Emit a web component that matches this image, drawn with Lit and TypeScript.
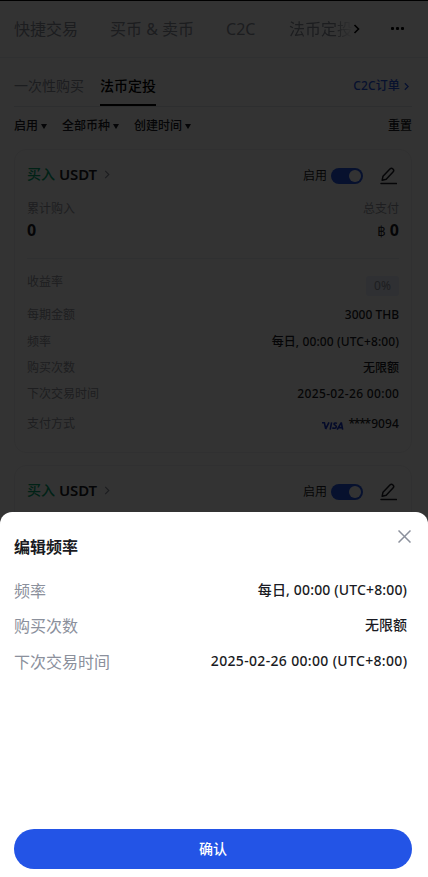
import { LitElement, html, css, svg, nothing } from "lit";
import { customElement, property } from "lit/decorators.js";

const caret = html`<svg width="6" height="5" viewBox="0 0 6 5"><path d="M0 0h6L3.4 4.6a.5.5 0 0 1-.8 0z" fill="currentColor"/></svg>`;

const chevron = (w: number, h: number, sw: number) => html`<svg width=${w} height=${h} viewBox="0 0 6 10">
  ${svg`<path d="M1 1l4 4-4 4" fill="none" stroke="currentColor" stroke-width=${sw}/>`}
</svg>`;

@customElement("plan-card")
export class PlanCard extends LitElement {
  @property() amount = "3000 THB";
  @property({ type: Boolean }) collapsed = false;

  static styles = css`
    :host { display: block; box-sizing: border-box; height: 304px; padding: 0 12px; border: 1px solid #f0f0f2; border-radius: 12px; font-size: 12px; color: #1a1b23; }
    svg { display: block; }
    .head { display: flex; align-items: center; box-sizing: border-box; height: 50px; padding-top: 2px; }
    .title { display: flex; align-items: center; height: 20px; margin-bottom: 5px; font-size: 14px; font-weight: 500; }
    .buy { color: #00a870; }
    .coin { margin-left: 4px; width: 38px; font-size: 15px; font-weight: 600; letter-spacing: -.15px; }
    .go { margin-left: 7px; color: #8b909c; margin-top: 2px; }
    .on { margin-left: auto; }
    .switch { box-sizing: border-box; width: 32px; height: 16px; margin-left: 4px; padding: 2px; border-radius: 8px; background: #2354e6; }
    .knob { width: 12px; height: 12px; margin-left: 16px; border-radius: 50%; background: #fff; }
    .edit { margin: -1px 2px 0 17px; }
    .totals { box-sizing: border-box; display: grid; grid-template-columns: 1fr auto; grid-template-rows: 18px 24px; align-content: start; height: 59px; border-bottom: 1px solid #eceef2; }
    .label { color: #9497a0; line-height: 18px; }
    .big { font-size: 16px; font-weight: 700; line-height: 24px; }
    .right { text-align: right; }
    .cur { font-family: Lato, sans-serif; font-size: 13px; font-weight: 400; }
    .row { display: flex; justify-content: space-between; align-items: center; height: 26.4px; font-weight: 500; }
    .row .label { font-weight: 400; }
    .row.profit { height: 43px; align-items: flex-start; padding-top: 14px; box-sizing: border-box; }
    .tag { width: 33px; height: 20px; margin-top: 3px; line-height: 20px; border-radius: 3px; text-align: center; background: #e8eefc; color: #9497a0; font-weight: 400; }
    .row.pay { height: 33px; }
    .daily { letter-spacing: .1px; margin-right: -.1px; }
    .date { letter-spacing: .35px; margin-right: -.35px; }
    .method { display: flex; align-items: center; gap: 4px; }
    .digits { letter-spacing: .1px; }
    .stars { letter-spacing: -1.2px; margin-right: 1.2px; }
    .visa { margin-top: 3px; }
  `;

  private details() {
    return html`
      <div class="totals">
        <span class="label">累计购入</span><span class="label right">总支付</span>
        <span class="big">0</span><span class="big right"><span class="cur">฿</span> 0</span>
      </div>
      <div class="row profit"><span class="label">收益率</span><span class="tag">0%</span></div>
      <div class="row"><span class="label">每期金额</span><span>${this.amount}</span></div>
      <div class="row"><span class="label">频率</span><span class="daily">每日, 00:00 (UTC+8:00)</span></div>
      <div class="row"><span class="label">购买次数</span><span>无限额</span></div>
      <div class="row"><span class="label">下次交易时间</span><span class="date">2025-02-26 00:00</span></div>
      <div class="row pay"><span class="label">支付方式</span>
        <span class="method">
          <svg class="visa" width="22" height="8" viewBox="0 0 22 8" fill="none" stroke="#1434cb" stroke-width="1.6">
            <path d="M0 .8h2.4l1.3 6M3.6 7.2 7 .4M9.6.3 8.2 7.6M15 1.4c-1.2-.7-3-.6-3 .5 0 1.4 2.6 1.2 2.3 3-.3 1.7-2.5 1.7-4 .9M15.2 7.6 19 1h.4l1.3 6.6M16.8 5.6h3.5"/>
          </svg>
          <span class="digits"><span class="stars">****</span>9094</span>
        </span>
      </div>`;
  }

  render() {
    return html`
      <div class="head">
        <div class="title"><span class="buy">买入</span><span class="coin">USDT</span><span class="go">${chevron(6, 9, 1.3)}</span></div>
        <span class="on">启用</span>
        <div class="switch"><div class="knob"></div></div>
        <svg class="edit" width="17" height="18" viewBox="0 0 17 18" fill="none" stroke="currentColor" stroke-width="1.5">
          <path d="M2.2 13.2 3 9.2 9.9 2.1a2.1 2.1 0 0 1 3.1 3L6.2 12.2z M1 16.6h15.5" stroke-linejoin="round" stroke-linecap="round"/>
        </svg>
      </div>
      ${this.collapsed ? nothing : this.details()}`;
  }
}

@customElement("app-root")
export class AppRoot extends LitElement {
  static styles = css`
    :host { display: block; position: relative; width: 428px; height: 877px; overflow: hidden; background: #fff; color: #1a1b23; font-family: "Noto Sans", "Noto Sans CJK SC", sans-serif; font-size: 12px; line-height: 18px; }
    svg { display: block; }
    .page { border-top: 1px solid #000; }
    .nav { box-sizing: border-box; display: flex; align-items: center; height: 57px; padding-left: 14px; border-bottom: 1px solid #eceef2; font-size: 16px; color: #8b909c; white-space: nowrap; }
    .nav > span { flex: none; margin-right: 32px; }
    .nav > .market { width: 84px; }
    .nav > .c2c { width: 31px; }
    .nav > .fade { width: 64px; margin-right: 0; mask-image: linear-gradient(90deg, #000 72%, transparent 100%); }
    .next { color: #000; }
    .dots { display: flex; gap: 2px; margin: -1px 0 0 31px; }
    .dots i { width: 3px; height: 3px; border-radius: 1px; background: #000; }
    .tabs { box-sizing: border-box; display: flex; align-items: stretch; height: 49px; margin: 0 16px 0 14px; border-bottom: 1px solid #e2e4ea; font-size: 14px; }
    .tab { display: flex; align-items: center; margin-right: 16px; color: #8b909c; padding-top: 8px; box-sizing: border-box; }
    .active { color: #000; font-weight: 500; border-bottom: 2px solid #000; padding-top: 10px; }
    .orders { display: flex; align-items: center; gap: 4px; margin-left: auto; padding: 8px 3px 0 0; font-size: 12px; letter-spacing: .15px; font-weight: 500; color: #2354e6; }
    .filters { display: flex; align-items: center; box-sizing: border-box; height: 37px; padding: 1px 16px 0 14px; font-weight: 500; }
    .filter { display: flex; align-items: center; gap: 3px; margin-right: 15px; }
    .reset { margin-left: auto; }
    .cards { display: flex; flex-direction: column; gap: 12px; margin: 5px 16px 0 14px; }
    .mask { position: absolute; inset: 1px 0 0; background: rgba(0, 0, 0, .8); }
    .sheet { position: absolute; box-sizing: border-box; left: 0; right: 0; bottom: 0; height: 365px; display: flex; flex-direction: column; padding: 23px 16px 8px 14px; border-radius: 12px 12px 0 0; background: #fff; }
    .sheet-head { display: flex; justify-content: space-between; height: 38px; font-size: 16px; font-weight: 700; line-height: 24px; }
    .close { margin: -5px 1px 0 0; }
    .item { display: flex; align-items: center; justify-content: space-between; height: 35.6px; padding-right: 5px; font-size: 16px; color: #8b909c; }
    .item b { font-size: 14px; font-weight: 500; color: #1a1b23; padding-bottom: 2px; }
    .item .daily { letter-spacing: .15px; margin-right: -.15px; }
    .item .date { letter-spacing: .33px; margin-right: -.33px; }
    .ok { height: 40px; margin-top: auto; border: 0; border-radius: 20px; background: #2354e6; color: #fff; font: 500 14px/40px "Noto Sans", "Noto Sans CJK SC", sans-serif; padding: 0; }
  `;

  render() {
    return html`
      <div class="page">
        <div class="nav">
          <span>快捷交易</span><span class="market">买币 &amp; 卖币</span><span class="c2c">C2C</span><span class="fade">法币定投</span>
          <div class="next">${chevron(7, 10, 1.6)}</div>
          <div class="dots"><i></i><i></i><i></i></div>
        </div>
        <div class="tabs">
          <div class="tab">一次性购买</div>
          <div class="tab active">法币定投</div>
          <div class="orders">C2C订单 ${chevron(5, 9, 1.6)}</div>
        </div>
        <div class="filters">
          <div class="filter">启用${caret}</div>
          <div class="filter">全部币种${caret}</div>
          <div class="filter">创建时间${caret}</div>
          <div class="reset">重置</div>
        </div>
        <div class="cards"><plan-card></plan-card><plan-card collapsed></plan-card></div>
      </div>
      <div class="mask"></div>
      <div class="sheet">
        <div class="sheet-head">编辑频率
          <svg class="close" width="13" height="13" viewBox="0 0 13 13"><path d="M.5.5l12 12M12.5.5l-12 12" stroke="#8b909c" stroke-width="1.5"/></svg>
        </div>
        <div class="item">频率<b class="daily">每日, 00:00 (UTC+8:00)</b></div>
        <div class="item">购买次数<b>无限额</b></div>
        <div class="item">下次交易时间<b class="date">2025-02-26 00:00 (UTC+8:00)</b></div>
        <button class="ok">确认</button>
      </div>`;
  }
}
